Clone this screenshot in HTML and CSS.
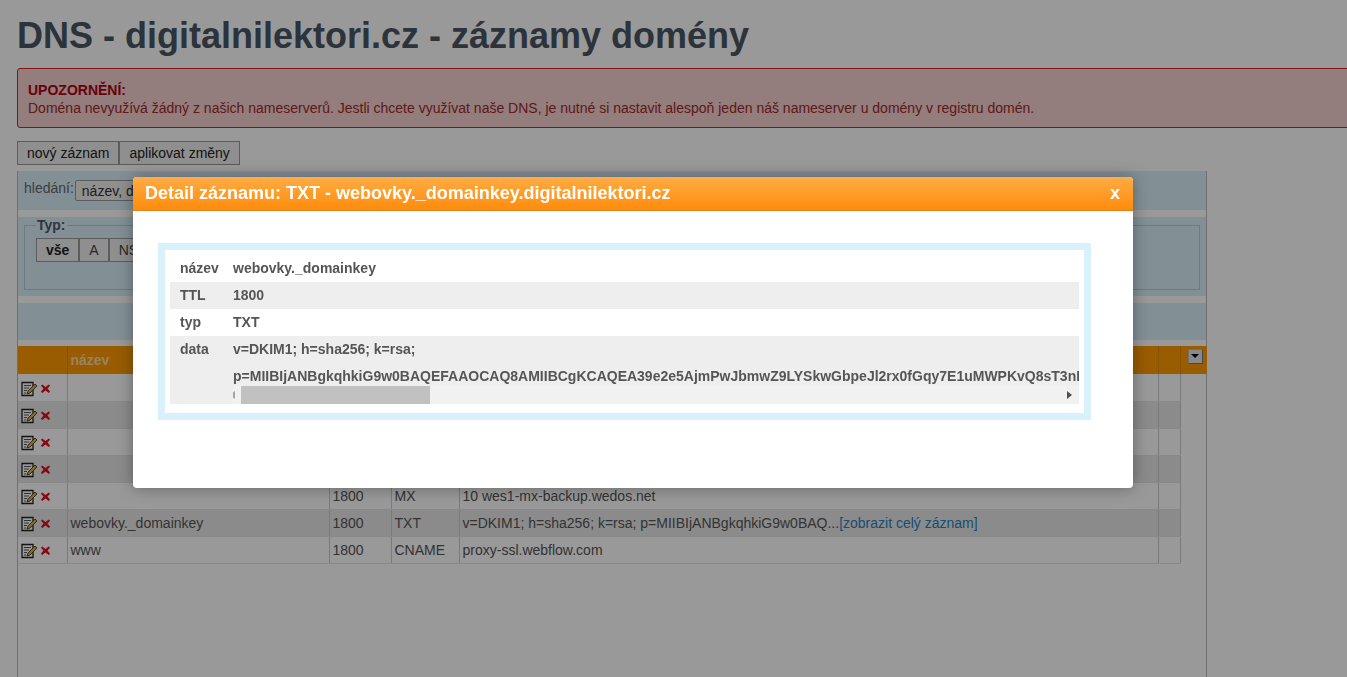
FILE: index.html
```html
<!DOCTYPE html>
<html lang="cs">
<head>
  <meta charset="UTF-8" />
  <title>DNS - digitalnilektori.cz - záznamy domény</title>
  <link rel="stylesheet" href="styles.css">
</head>
<body>
  <svg class="defs" width="0" height="0">
    <symbol id="edit" viewBox="0 0 17 16">
      <path d="M1 1.500h11v13H1z" fill="#fff" stroke="#222" stroke-width="1.300"/>
      <path d="M3 4.500h7M3 7h5M3 9.500h3M3 12h2" stroke="#456" stroke-width="1"/>
      <path d="M6 13l1-3 7-7 2 2-7 7z" fill="#d9b04a" stroke="#4a3a10" stroke-width=".9"/>
    </symbol>
    <symbol id="del" viewBox="0 0 12 12">
      <path d="M2.500 1.500L6 4.300l3.500-2.800 1.500 1.500L8.200 6 11 9.500 9.500 11 6 8.200 2.500 11 1 9.500 3.800 6 1 3z" fill="#e01020"/>
    </symbol>
  </svg>

  <div class="page">
    <h1>DNS - digitalnilektori.cz - záznamy domény</h1>

    <div class="alert">
      <strong>UPOZORNĚNÍ:</strong><br>
      Doména nevyužívá žádný z našich nameserverů. Jestli chcete využívat naše DNS, je nutné si nastavit alespoň jeden náš nameserver u domény v registru domén.
    </div>

    <div class="actions">
      <button class="btn">nový záznam</button><button class="btn">aplikovat změny</button>
    </div>

    <div class="panel">
      <div class="bar bar-search">
        <label>hledání:</label>
        <button class="btn-small">název, data</button>
      </div>
      <div class="bar bar-filter">
        <fieldset class="filter">
          <legend>Typ:</legend>
          <button class="btn-type current">vše</button><button class="btn-type">A</button><button class="btn-type">NS</button>
        </fieldset>
      </div>
      <div class="bar bar-empty"></div>

      <table class="records">
        <colgroup>
          <col class="c-icons"><col class="c-name"><col class="c-ttl"><col class="c-type"><col class="c-data"><col class="c-extra"><col class="c-menu">
        </colgroup>
        <thead>
          <tr>
            <th></th><th>název</th><th>TTL</th><th>typ</th><th>data</th><th></th>
            <th class="menu-cell"><span class="menu-btn"></span></th>
          </tr>
        </thead>
        <tbody>
          <tr><td class="icons"><svg class="i-edit"><use href="#edit"/></svg><svg class="i-del"><use href="#del"/></svg></td><td></td><td></td><td></td><td></td><td></td><td class="blank"></td></tr>
          <tr><td class="icons"><svg class="i-edit"><use href="#edit"/></svg><svg class="i-del"><use href="#del"/></svg></td><td></td><td></td><td></td><td></td><td></td><td class="blank"></td></tr>
          <tr><td class="icons"><svg class="i-edit"><use href="#edit"/></svg><svg class="i-del"><use href="#del"/></svg></td><td></td><td></td><td></td><td></td><td></td><td class="blank"></td></tr>
          <tr><td class="icons"><svg class="i-edit"><use href="#edit"/></svg><svg class="i-del"><use href="#del"/></svg></td><td></td><td></td><td></td><td></td><td></td><td class="blank"></td></tr>
          <tr><td class="icons"><svg class="i-edit"><use href="#edit"/></svg><svg class="i-del"><use href="#del"/></svg></td><td></td><td>1800</td><td>MX</td><td>10 wes1-mx-backup.wedos.net</td><td></td><td class="blank"></td></tr>
          <tr><td class="icons"><svg class="i-edit"><use href="#edit"/></svg><svg class="i-del"><use href="#del"/></svg></td><td>webovky._domainkey</td><td>1800</td><td>TXT</td><td>v=DKIM1; h=sha256; k=rsa; p=MIIBIjANBgkqhkiG9w0BAQ...<a href="#">[zobrazit celý záznam]</a></td><td></td><td class="blank"></td></tr>
          <tr><td class="icons"><svg class="i-edit"><use href="#edit"/></svg><svg class="i-del"><use href="#del"/></svg></td><td>www</td><td>1800</td><td>CNAME</td><td>proxy-ssl.webflow.com</td><td></td><td class="blank"></td></tr>
        </tbody>
      </table>
    </div>
  </div>

  <div class="overlay"></div>

  <div class="modal">
    <div class="modal-head">
      <span>Detail záznamu: TXT - webovky._domainkey.digitalnilektori.cz</span>
      <a href="#" class="modal-close">x</a>
    </div>
    <div class="modal-body">
      <div class="detail">
        <div class="detail-row"><div class="detail-key">název</div><div class="detail-val">webovky._domainkey</div></div>
        <div class="detail-row alt"><div class="detail-key">TTL</div><div class="detail-val">1800</div></div>
        <div class="detail-row"><div class="detail-key">typ</div><div class="detail-val">TXT</div></div>
        <div class="detail-row alt">
          <div class="detail-key">data</div>
          <div class="detail-val detail-long">
            <div class="long-text">v=DKIM1; h=sha256; k=rsa;<br>p=MIIBIjANBgkqhkiG9w0BAQEFAAOCAQ8AMIIBCgKCAQEA39e2e5AjmPwJbmwZ9LYSkwGbpeJl2rx0fGqy7E1uMWPKvQ8sT3nL</div>
            <div class="scroll">
              <span class="arrow arrow-left"></span>
              <span class="thumb"></span>
              <span class="arrow arrow-right"></span>
            </div>
          </div>
        </div>
      </div>
    </div>
  </div>
</body>
</html>
```

FILE: styles.css
```css
* {
  box-sizing: border-box;
}
html, body {
  height: 100%;
  margin: 0;
  overflow: hidden;
}
body {
  font-family: 'Liberation Sans', Arial, sans-serif;
  font-size: 14px;
  color: #444;
  background: #fff;
}
.defs {
  position: absolute;
}
.page {
  width: 1400px;
  padding-left: 17px;
}
h1 {
  margin: 0;
  padding-top: 15px;
  height: 68px;
  font-size: 36px;
  line-height: 42px;
  font-weight: bold;
  color: #4a5663;
}
.alert {
  height: 60px;
  padding: 12px 10px;
  font-size: 14px;
  line-height: 18px;
  background: #f5d0d0;
  color: #a02a2a;
  border: 1px solid #e02020;
  border-radius: 3px;
}
.alert strong {
  color: #b00010;
}
.actions {
  display: flex;
  margin-top: 13px;
  height: 24px;
}
.btn {
  height: 24px;
  padding: 0 9px;
  font: 14px 'Liberation Sans', Arial, sans-serif;
  color: #222;
  background: #eee;
  border: 1px solid #999;
}
.btn + .btn {
  border-left-width: 1px;
}
.panel {
  width: 1190px;
  height: 520px;
  margin-top: 6px;
  border: solid #bbb;
  border-width: 0 1px;
}
.bar {
  background: #d9f1fa;
  margin-bottom: 7px;
}
.bar-search {
  height: 39px;
  padding: 9px 6px;
  display: flex;
  align-items: flex-start;
  gap: 1px;
  color: #666;
}
.btn-small {
  height: 21px;
  padding: 0 6px;
  font: 14px 'Liberation Sans', Arial, sans-serif;
  color: #333;
  background: #eee;
  border: 1px solid #999;
  border-radius: 2px;
}
.bar-filter {
  height: 79px;
  padding: 0 6px;
}
.filter {
  margin: 0;
  padding: 5px 11px;
  height: 73px;
  border: 1px solid #aac;
  border-color: #b8c8d0;
}
.filter legend {
  padding: 0 1px;
  font-weight: bold;
  color: #556;
}
.btn-type {
  height: 24px;
  padding: 0 9px;
  font: 14px 'Liberation Sans', Arial, sans-serif;
  color: #444;
  background: #eee;
  border: 1px solid #999;
}
.btn-type.current {
  font-weight: bold;
  color: #222;
}
.bar-empty {
  height: 37px;
  margin-bottom: 6px;
}
.records {
  width: 1189px;
  table-layout: fixed;
  border-collapse: collapse;
}
.c-icons { width: 49px; }
.c-name { width: 262px; }
.c-ttl { width: 62px; }
.c-type { width: 68px; }
.c-data { width: 699px; }
.c-extra { width: 22px; }
.c-menu { width: 27px; }
.records th {
  height: 28px;
  padding: 0 3px;
  text-align: left;
  font-size: 14px;
  color: #ffd9a0;
  background: #ff9a00;
  border-right: 1px solid #e08800;
}
.records th:last-child {
  border-right: 0;
}
.menu-cell {
  position: relative;
}
.menu-btn {
  position: absolute;
  right: 4px;
  top: 3px;
  width: 15px;
  height: 15px;
  background: #e4e4e4;
  border: 1px solid #bbb;
  border-right-color: #777;
  border-bottom-color: #777;
}
.menu-btn::after {
  content: "";
  position: absolute;
  left: 2px;
  top: 4px;
  border: 4px solid transparent;
  border-top: 4px solid #000;
  border-bottom: 0;
}
.records td {
  height: 27px;
  padding: 0 3px;
  line-height: 26px;
  border-right: 1px solid #ccc;
  border-bottom: 1px solid #e4e4e4;
  white-space: nowrap;
  overflow: hidden;
  color: #555;
}
.records tbody tr:nth-child(even) td {
  background: #e8e8e8;
}
.records tbody tr td.blank {
  background: none;
  border: 0;
}
.records a {
  color: #2a80c0;
  text-decoration: none;
}
.records td.icons {
  padding: 0 0 0 3px;
}
.i-edit {
  width: 17px;
  height: 16px;
  vertical-align: middle;
}
.i-del {
  width: 11px;
  height: 11px;
  margin-left: 2px;
  vertical-align: middle;
}
.overlay {
  position: fixed;
  inset: 0;
  background: rgba(0, 0, 0, 0.4);
}
.modal {
  position: absolute;
  left: 133px;
  top: 177px;
  width: 1000px;
  height: 311px;
  background: #fff;
  border-radius: 4px;
  box-shadow: 0 0 16px rgba(0, 0, 0, 0.35);
}
.modal-head {
  height: 34px;
  padding: 0 12px;
  display: flex;
  align-items: center;
  justify-content: space-between;
  font-size: 18px;
  font-weight: bold;
  color: #fff;
  background: linear-gradient(#ffac45, #ff8c0c);
  border-bottom: 1px solid #e08418;
  border-radius: 4px 4px 0 0;
}
.modal-close {
  color: #fff;
  text-decoration: none;
  padding-right: 1px;
}
.modal-body {
  padding: 32px 42px 0 25px;
}
.detail {
  border: 7px solid #d9f1fa;
  padding: 5px 5px 5px 5px;
  height: 177px;
}
.detail-row {
  display: flex;
  min-height: 27px;
  font-weight: bold;
  color: #555;
  line-height: 27px;
}
.detail-row.alt {
  background: #eee;
}
.detail-key {
  width: 63px;
  flex: none;
  padding-left: 10px;
}
.detail-val {
  flex: 1;
  min-width: 0;
}
.detail-long {
  overflow: hidden;
}
.long-text {
  white-space: nowrap;
  overflow: hidden;
  line-height: 27px;
  height: 50px;
}
.scroll {
  display: flex;
  align-items: center;
  height: 18px;
  margin-left: -9px;
  background: #f1f1f1;
}
.thumb {
  width: 189px;
  height: 18px;
  margin-left: 6px;
  background: #c1c1c1;
}
.arrow {
  width: 0;
  height: 0;
  border: 4px solid transparent;
}
.arrow-left {
  margin-left: 6px;
  border-left: 0;
  border-right: 5px solid #a3a3a3;
  margin-right: 0;
  flex: none;
}
.arrow-right {
  margin-left: auto;
  margin-right: 7px;
  border-right: 0;
  border-left: 5px solid #505050;
}
```
